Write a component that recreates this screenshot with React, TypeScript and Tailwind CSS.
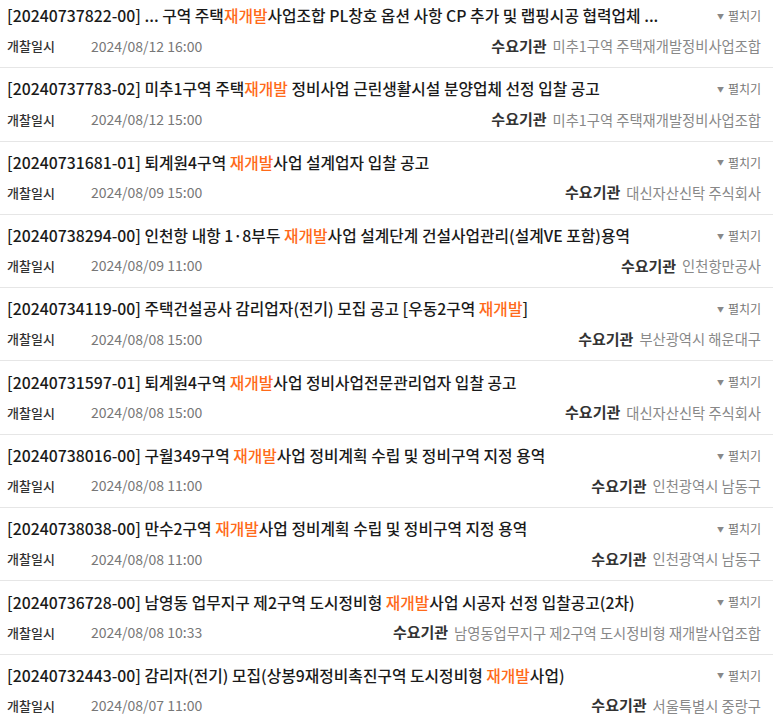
import React from 'react';

type Bid = {
  no: string;
  pre: string;
  post: string;
  date: string;
  org: string;
};

const bids: Bid[] = [
  { no: '20240737822-00', pre: '... 구역 주택', post: '사업조합 PL창호 옵션 사항 CP 추가 및 랩핑시공 협력업체 ...', date: '2024/08/12 16:00', org: '미추1구역 주택재개발정비사업조합' },
  { no: '20240737783-02', pre: '미추1구역 주택', post: ' 정비사업 근린생활시설 분양업체 선정 입찰 공고', date: '2024/08/12 15:00', org: '미추1구역 주택재개발정비사업조합' },
  { no: '20240731681-01', pre: '퇴계원4구역 ', post: '사업 설계업자 입찰 공고', date: '2024/08/09 15:00', org: '대신자산신탁 주식회사' },
  { no: '20240738294-00', pre: '인천항 내항 1·8부두 ', post: '사업 설계단계 건설사업관리(설계VE 포함)용역', date: '2024/08/09 11:00', org: '인천항만공사' },
  { no: '20240734119-00', pre: '주택건설공사 감리업자(전기) 모집 공고 [우동2구역 ', post: ']', date: '2024/08/08 15:00', org: '부산광역시 해운대구' },
  { no: '20240731597-01', pre: '퇴계원4구역 ', post: '사업 정비사업전문관리업자 입찰 공고', date: '2024/08/08 15:00', org: '대신자산신탁 주식회사' },
  { no: '20240738016-00', pre: '구월349구역 ', post: '사업 정비계획 수립 및 정비구역 지정 용역', date: '2024/08/08 11:00', org: '인천광역시 남동구' },
  { no: '20240738038-00', pre: '만수2구역 ', post: '사업 정비계획 수립 및 정비구역 지정 용역', date: '2024/08/08 11:00', org: '인천광역시 남동구' },
  { no: '20240736728-00', pre: '남영동 업무지구 제2구역 도시정비형 ', post: '사업 시공자 선정 입찰공고(2차)', date: '2024/08/08 10:33', org: '남영동업무지구 제2구역 도시정비형 재개발사업조합' },
  { no: '20240732443-00', pre: '감리자(전기) 모집(상봉9재정비촉진구역 도시정비형 ', post: '사업)', date: '2024/08/07 11:00', org: '서울특별시 중랑구' },
];

const font = { fontFamily: '"Noto Sans CJK KR", "Noto Sans", sans-serif' };

function Row({ bid }: { bid: Bid }) {
  return (
    <li className="h-[73.3px] border-b border-[#e6e6e6] pl-[7px] pr-[12px] pt-[6px]">
      <div className="flex h-[30px] items-center justify-between">
        <div className="truncate whitespace-pre text-[15.8px] font-medium text-[#1a1a1a]">
          [{bid.no}] {bid.pre}
          <span className="text-[#ff6a1a]">재개발</span>
          {bid.post}
        </div>
        <button className="ml-3 flex shrink-0 items-center gap-[4px] text-[12px] text-[#777]">
          <span className="text-[7px] text-[#888]">▼</span>
          펼치기
        </button>
      </div>
      <div className="flex h-[30px] items-center justify-between">
        <div className="flex items-center">
          <span className="w-[84px] text-[13px] font-medium text-[#333]">개찰일시</span>
          <span className="text-[14px] text-[#777]">{bid.date}</span>
        </div>
        <div className="flex items-center gap-[6px]">
          <span className="text-[15px] font-bold text-[#333]">수요기관</span>
          <span className="text-[14.3px] text-[#888]">{bid.org}</span>
        </div>
      </div>
    </li>
  );
}

export default function App() {
  return (
    <div className="h-[725px] w-[773px] overflow-hidden bg-white" style={font}>
      <ul className="-mt-[5px]">
        {bids.map((b) => (
          <Row key={b.no} bid={b} />
        ))}
      </ul>
    </div>
  );
}
